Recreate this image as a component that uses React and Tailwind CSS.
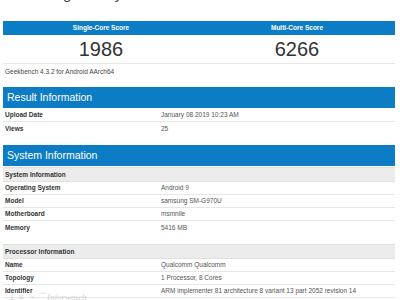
import React from 'react';

const Row = ({ label, value, last }) => (
  <div className={`grid grid-cols-[158px_1fr] h-[13px] items-center ${last ? '' : 'border-b border-[#e6e6e6]'}`}>
    <div className="pl-[2px] font-bold text-[6.5px] text-[#333]">{label}</div>
    <div className="text-[6.5px] text-[#555] whitespace-nowrap">{value}</div>
  </div>
);

const SectionHeader = ({ title }) => (
  <div className="h-[21px] bg-[#0c7cc4] flex items-center pl-[4px] text-white text-[10.5px]">{title}</div>
);

const SubHeader = ({ title }) => (
  <div className="h-[15px] bg-[#ececec] border-y border-[#e0e0e0] flex items-center pl-[2px] font-bold text-[6.5px] text-[#333]">
    {title}
  </div>
);

export default function App() {
  return (
    <div className="w-[400px] h-[300px] overflow-hidden bg-white relative font-['Liberation_Sans',Arial,sans-serif]">
      <div className="h-[21px] overflow-hidden">
        <div className="-mt-[15px] pl-[8px] text-[15px] leading-[18px] text-[#444]">Samsung Galaxy S10+</div>
      </div>

      <div className="ml-[3px] mr-[5px]">
        <div className="grid grid-cols-2">
          <div className="flex flex-col">
            <div className="h-[14px] bg-[#0c7cc4] flex items-center justify-center text-white font-bold text-[6.5px]">Single-Core Score</div>
            <div className="h-[28px] flex items-center justify-center text-[20px] text-[#333]">1986</div>
          </div>
          <div className="flex flex-col">
            <div className="h-[14px] bg-[#0c7cc4] flex items-center justify-center text-white font-bold text-[6.5px]">Multi-Core Score</div>
            <div className="h-[28px] flex items-center justify-center text-[20px] text-[#333]">6266</div>
          </div>
        </div>
        <div className="border-t border-[#e6e6e6] h-[16px] flex items-center pl-[2px] text-[6.5px] text-[#444]">
          Geekbench 4.3.2 for Android AArch64
        </div>

        <div className="mt-[8px]">
          <SectionHeader title="Result Information" />
          <div className="mt-[1px]">
            <Row label="Upload Date" value="January 08 2019 10:23 AM" />
            <Row label="Views" value="25" last />
          </div>
        </div>

        <div className="mt-[10px]">
          <SectionHeader title="System Information" />
          <div className="mt-[1px]">
            <SubHeader title="System Information" />
          </div>
          <Row label="Operating System" value="Android 9" />
          <Row label="Model" value="samsung SM-G970U" />
          <Row label="Motherboard" value="msmnile" />
          <Row label="Memory" value="5416 MB" last />
        </div>

        <div className="mt-[10px]">
          <SubHeader title="Processor Information" />
          <Row label="Name" value="Qualcomm Qualcomm" />
          <Row label="Topology" value="1 Processor, 8 Cores" />
          <Row label="Identifier" value="ARM implementer 81 architecture 8 variant 13 part 2052 revision 14" />
        </div>
      </div>

      <div className="absolute left-[8px] top-[291px] flex items-center gap-[6px] text-[#c4c4c4] opacity-70">
        <span className="text-[9px]">⊥ ≡</span>
        <span className="text-[9px] italic font-['Liberation_Serif',serif]">{'<⌒ Inforwatch'}</span>
      </div>
    </div>
  );
}
